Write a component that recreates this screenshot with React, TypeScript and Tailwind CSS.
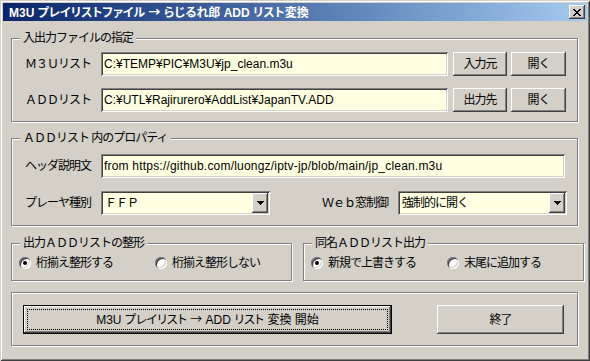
import React from "react";

const raised =
  "shadow-[inset_-1px_-1px_#404040,inset_1px_1px_#ffffff,inset_-2px_-2px_#808080]";
const sunken =
  "shadow-[inset_1px_1px_#808080,inset_-1px_-1px_#ffffff,inset_2px_2px_#404040,inset_-2px_-2px_#d4d0c8]";
const jp = "text-[12px] leading-[14px] tracking-[-1px] text-black";

function Arrow() {
  return (
    <span className="font-['Noto_Sans_CJK_JP',sans-serif] [font-feature-settings:normal]">→</span>
  );
}

function Group({
  label,
  className = "",
  children,
}: {
  label?: string;
  className?: string;
  children: React.ReactNode;
}) {
  return (
    <div
      className={`relative border border-[#808080] shadow-[inset_1px_1px_#ffffff,1px_1px_#ffffff] ${className}`}
    >
      {label && (
        <span
          className={`absolute left-[8px] top-[-9px] bg-[#d4d0c8] px-[3px] ${jp} leading-[16px]`}
        >
          {label}
        </span>
      )}
      {children}
    </div>
  );
}

function Field({ value, className = "" }: { value: string; className?: string }) {
  return (
    <div
      className={`flex h-[24px] items-center bg-[#ffffe1] pl-[3px] text-[12px] text-black whitespace-nowrap overflow-hidden ${sunken} ${className}`}
    >
      {value}
    </div>
  );
}

function Combo({ value, className = "" }: { value: string; className?: string }) {
  return (
    <div className={`flex h-[24px] bg-[#ffffe1] p-[2px] ${sunken} ${className}`}>
      <span className={`flex flex-1 items-center pl-[2px] ${jp}`}>{value}</span>
      <span
        className={`flex w-[16px] items-center justify-center bg-[#d4d0c8] ${raised}`}
      >
        <svg width="7" height="4" viewBox="0 0 7 4" shapeRendering="crispEdges">
          <rect x="0" y="0" width="7" height="1" fill="#000" />
          <rect x="1" y="1" width="5" height="1" fill="#000" />
          <rect x="2" y="2" width="3" height="1" fill="#000" />
          <rect x="3" y="3" width="1" height="1" fill="#000" />
        </svg>
      </span>
    </div>
  );
}

function Btn({ children, className = "" }: { children: React.ReactNode; className?: string }) {
  return (
    <button
      className={`flex h-[24px] items-center justify-center bg-[#d4d0c8] ${raised} ${jp} ${className}`}
    >
      {children}
    </button>
  );
}

function Radio({ label, checked }: { label: string; checked?: boolean }) {
  return (
    <div className="flex w-[136px] items-center gap-[5px]">
      <span
        className={`flex h-[12px] w-[12px] items-center justify-center rounded-full bg-white ${sunken}`}
      >
        {checked && <span className="h-[4px] w-[4px] rounded-full bg-black" />}
      </span>
      <span className={jp}>{label}</span>
    </div>
  );
}

// classic 8x7 pixel close glyph
const closeRows: [number, number, number][] = [
  [0, 0, 2], [6, 0, 2],
  [1, 1, 2], [5, 1, 2],
  [2, 2, 4],
  [3, 3, 2],
  [2, 4, 4],
  [1, 5, 2], [5, 5, 2],
  [0, 6, 2], [6, 6, 2],
];

function CloseGlyph() {
  return (
    <svg width="8" height="7" viewBox="0 0 8 7" shapeRendering="crispEdges">
      {closeRows.map(([x, y, w], i) => (
        <rect key={i} x={x} y={y} width={w} height={1} fill="#000" />
      ))}
    </svg>
  );
}

export default function App() {
  return (
    <div className="h-[361px] w-[590px] overflow-hidden bg-[#d4d0c8] font-['Liberation_Sans','Noto_Sans_CJK_JP',sans-serif] shadow-[inset_1px_1px_#d4d0c8,inset_-1px_-1px_#404040,inset_2px_2px_#ffffff,inset_-2px_-2px_#808080] p-[3px]">
      {/* Title bar */}
      <div className="flex h-[18px] items-center bg-linear-to-r from-[#0a246a] to-[#a6caf0] pl-[6px] pr-[2px]">
        <span className="flex-1 text-[12px] font-bold leading-[14px] text-white [font-feature-settings:'palt']">
          M3U プレイリストファイル <Arrow /> らじるれ郎 ADD リスト変換
        </span>
        <span
          className={`flex h-[14px] w-[16px] items-center justify-center bg-[#d4d0c8] ${raised}`}
        >
          <CloseGlyph />
        </span>
      </div>

      <div className="pl-[8px] pr-[9px]">
        {/* 入出力ファイルの指定 */}
        <Group label="入出力ファイルの指定" className="mt-[17px] h-[84px] pl-[13px] pt-[13px]">
          <div className="flex h-[24px] items-center">
            <span className={`w-[76px] ${jp}`}>Ｍ３Ｕリスト</span>
            <Field className="w-[347px]" value="C:¥TEMP¥PIC¥M3U¥jp_clean.m3u" />
            <Btn className="ml-[5px] w-[54px]">入力元</Btn>
            <Btn className="ml-[4px] w-[55px]">開く</Btn>
          </div>
          <div className="mt-[12px] flex h-[24px] items-center">
            <span className={`w-[76px] ${jp}`}>ＡＤＤリスト</span>
            <Field className="w-[347px]" value="C:¥UTL¥Rajirurero¥AddList¥JapanTV.ADD" />
            <Btn className="ml-[5px] w-[54px]">出力先</Btn>
            <Btn className="ml-[4px] w-[55px]">開く</Btn>
          </div>
        </Group>

        {/* ADDリスト 内のプロパティ */}
        <Group label="ＡＤＤリスト 内のプロパティ" className="mt-[16px] h-[88px] pl-[13px] pt-[15px]">
          <div className="flex h-[24px] items-center">
            <span className={`w-[76px] ${jp}`}>ヘッダ説明文</span>
            <Field
              className="w-[464px] tracking-[0.2px]"
              value="from https://github.com/luongz/iptv-jp/blob/main/jp_clean.m3u"
            />
          </div>
          <div className="mt-[13px] flex h-[24px] items-center">
            <span className={`w-[76px] ${jp}`}>プレーヤ種別</span>
            <Combo className="w-[169px]" value="ＦＦＰ" />
            <span className={`ml-[52px] w-[76px] ${jp}`}>Ｗｅｂ窓制御</span>
            <Combo className="w-[169px]" value="強制的に開く" />
          </div>
        </Group>

        {/* 整形 / 出力 */}
        <div className="mt-[17px] flex gap-[11px]">
          <Group label="出力ＡＤＤリストの整形" className="flex h-[38px] flex-1 items-center pl-[7px] pt-[2px]">
            <Radio label="桁揃え整形する" checked />
            <Radio label="桁揃え整形しない" />
          </Group>
          <Group label="同名ＡＤＤリスト出力" className="flex h-[38px] flex-1 items-center pl-[7px] pt-[2px]">
            <Radio label="新規で上書きする" checked />
            <Radio label="末尾に追加する" />
          </Group>
        </div>

        {/* 実行 */}
        <Group className="mt-[11px] flex h-[54px] items-start pl-[11px] pt-[12px]">
          <button
            className={`flex h-[29px] w-[369px] border border-black bg-[#d4d0c8] p-[3px] ${raised}`}
          >
            <span className="flex flex-1 items-center justify-center border border-dotted border-black text-[12px] leading-[14px] text-black">
              <span className="[font-feature-settings:'palt']">
                M3U プレイリスト <Arrow /> ADD リスト 変換 開始
              </span>
            </span>
          </button>
          <Btn className="ml-[45px] h-[29px] w-[127px]">終了</Btn>
        </Group>
      </div>
    </div>
  );
}
